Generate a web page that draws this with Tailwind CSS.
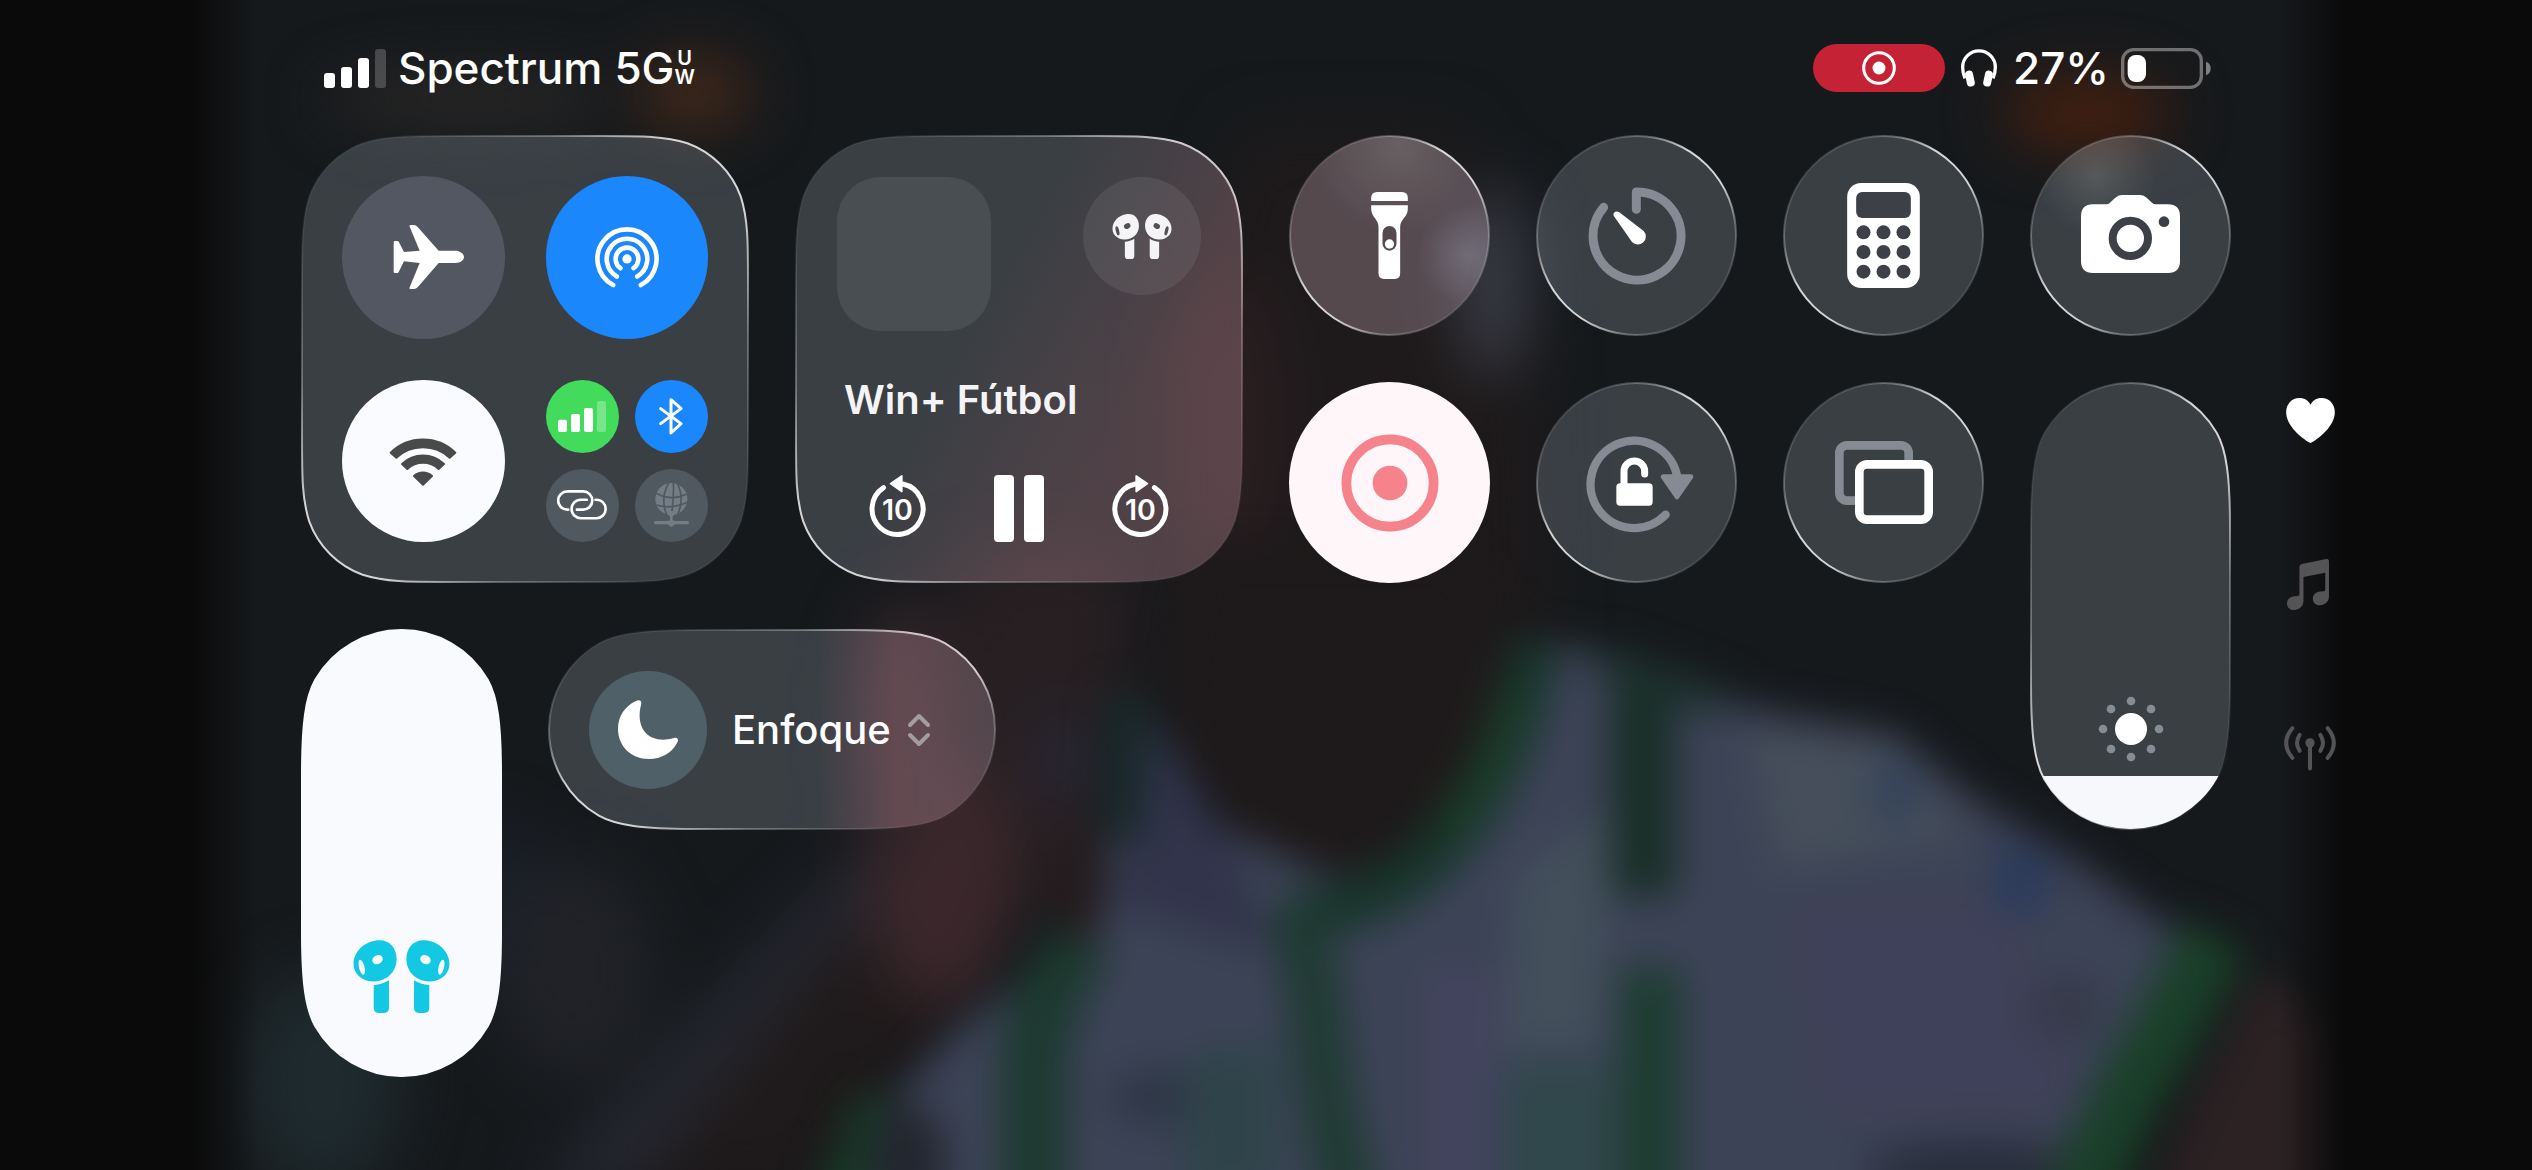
<!DOCTYPE html>
<html lang="es">
<head>
  <meta charset="UTF-8">
  <title>Centro de control</title>
  <meta name="viewport" content="width=device-width, initial-scale=1.0">
  <script src="https://cdn.jsdelivr.net/npm/@tailwindcss/browser@4"></script>
</head>
<body class="relative min-h-screen overflow-x-hidden bg-[#0a0a0a] font-['Inter','Noto_Sans',sans-serif] text-white">

  <!-- shared shapes -->
  <svg class="absolute w-0 h-0" aria-hidden="true">
    <defs>
      <linearGradient id="rim" x1="0" y1="0" x2="1" y2="1">
        <stop offset="0.1" stop-color="#fff" stop-opacity="0.05"/>
        <stop offset="0.28" stop-color="#fff" stop-opacity="0.3"/>
        <stop offset="0.42" stop-color="#fff" stop-opacity="0.8"/>
        <stop offset="0.58" stop-color="#fff" stop-opacity="0.8"/>
        <stop offset="0.72" stop-color="#fff" stop-opacity="0.3"/>
        <stop offset="0.9" stop-color="#fff" stop-opacity="0.05"/>
      </linearGradient>
      <radialGradient id="lensBlue">
        <stop offset="0" stop-color="#9aa4c0" stop-opacity="0.24"/>
        <stop offset="1" stop-color="#9aa4c0" stop-opacity="0"/>
      </radialGradient>
      <radialGradient id="lensWarm">
        <stop offset="0" stop-color="#b0b0a4" stop-opacity="0.2"/>
        <stop offset="1" stop-color="#b0b0a4" stop-opacity="0"/>
      </radialGradient>
      <linearGradient id="mediaTint" x1="0.45" y1="0.3" x2="0.9" y2="0.55">
        <stop offset="0" stop-color="#8c4a50" stop-opacity="0"/>
        <stop offset="0.8" stop-color="#8c4a50" stop-opacity="0.26"/>
      </linearGradient>
      <linearGradient id="focusTint" x1="0" y1="0" x2="1" y2="0">
        <stop offset="0.6" stop-color="#a8505a" stop-opacity="0"/>
        <stop offset="0.78" stop-color="#a8505a" stop-opacity="0.22"/>
        <stop offset="1" stop-color="#a8505a" stop-opacity="0.1"/>
      </linearGradient>
      <path id="tall" d="M100.5 1 A99.5 99.5 0 0 1 186.7 50.8 C196.5 68 200 95 200 145 V303 C200 353 196.5 380 186.7 397.2 A99.5 99.5 0 0 1 14.3 397.2 C4.500 380 1 353 1 303 V145 C1 95 4.500 68 14.3 50.800 A99.5 99.5 0 0 1 100.500 1Z"/>
      <path id="square" d="M147.800 1 H300.200 C342.500 1 363.600 1 386.400 8.200 C411.200 17.200 430.800 36.800 439.800 61.600 C447 84.400 447 105.500 447 147.800 V300.200 C447 342.500 447 363.600 439.800 386.400 C430.800 411.200 411.200 430.800 386.400 439.800 C363.600 447 342.500 447 300.200 447 H147.800 C105.500 447 84.400 447 61.600 439.800 C36.800 430.800 17.200 411.200 8.200 386.400 C1 363.600 1 342.500 1 300.200 V147.800 C1 105.500 1 84.400 8.200 61.600 C17.200 36.800 36.800 17.200 61.600 8.200 C84.400 1 105.500 1 147.800 1Z"/>
      <path id="wide" d="M1 100.500 A99.5 99.5 0 0 1 50.800 14.300 C68 4.500 95 1 145 1 H303 C353 1 380 4.500 397.200 14.300 A99.5 99.5 0 0 1 397.200 186.700 C380 196.500 353 200 303 200 H145 C95 200 68 196.500 50.800 186.700 A99.5 99.5 0 0 1 1 100.500Z"/>
      <clipPath id="tallClip"><use href="#tall"/></clipPath>
      <clipPath id="circleClip"><circle cx="100.500" cy="100.500" r="99.500"/></clipPath>
      <mask id="podMask">
        <rect width="89" height="134" fill="#fff"/>
        <ellipse cx="45" cy="36" rx="10" ry="8" transform="rotate(-28 45 36)" fill="#000"/>
        <ellipse cx="16" cy="50" rx="5" ry="14" transform="rotate(-14 16 50)" fill="#000"/>
      </mask>
      <g id="pod">
        <path mask="url(#podMask)" d="M42 1 C64 -3 80 12 80 35 C80 60 60 77 36 76 C14 75 1 60 1 44 C1 22 20 4 42 1Z"/>
        <path d="M38 83 C49 82 58 79 66 74 V124 Q66 134 57 134 H47 Q38 134 38 124Z"/>
      </g>
      <symbol id="airpods" viewBox="0 0 178 134">
        <use href="#pod"/>
        <use href="#pod" transform="translate(178 0) scale(-1 1)"/>
      </symbol>
      <symbol id="record" viewBox="-147 -147 294 294">
        <circle r="131" fill="none" stroke="currentColor" stroke-width="29"/>
        <circle r="52" fill="currentColor"/>
      </symbol>
      <symbol id="glassCircle" viewBox="0 0 201 201">
        <circle cx="100.500" cy="100.500" r="99.500" fill="#e0f0ff" fill-opacity="0.18" stroke="url(#rim)" stroke-width="2"/>
      </symbol>
    </defs>
  </svg>

  <!-- blurred video behind the panel -->
  <svg class="absolute inset-0 w-full h-full" viewBox="0 0 1568 725" preserveAspectRatio="xMidYMid slice" aria-hidden="true">
    <defs>
      <filter id="soft" x="-20%" y="-20%" width="140%" height="140%" color-interpolation-filters="sRGB"><feGaussianBlur stdDeviation="12"/></filter>
      <filter id="softer" x="-20%" y="-20%" width="140%" height="140%" color-interpolation-filters="sRGB"><feGaussianBlur stdDeviation="18"/></filter>
      <linearGradient id="fade" x1="0" y1="0" x2="1" y2="0">
        <stop offset="0" stop-color="#0a0a0a"/>
        <stop offset="0.075" stop-color="#0a0a0a"/>
        <stop offset="0.102" stop-color="#0a0a0a" stop-opacity="0"/>
        <stop offset="0.9" stop-color="#0a0a0a" stop-opacity="0"/>
        <stop offset="0.927" stop-color="#0a0a0a"/>
        <stop offset="1" stop-color="#0a0a0a"/>
      </linearGradient>
    </defs>
    <rect width="1568" height="725" fill="#16191c"/>
    <g filter="url(#softer)">
      <ellipse cx="430" cy="58" rx="36" ry="22" fill="#43291a"/>
      <ellipse cx="290" cy="62" rx="90" ry="16" fill="#2a2827"/>
      <ellipse cx="1292" cy="70" rx="52" ry="22" fill="#47200f"/>
      <ellipse cx="200" cy="670" rx="50" ry="70" fill="#1e2a2d"/>
      <ellipse cx="300" cy="560" rx="40" ry="50" fill="#1a1f29"/>
      <ellipse cx="355" cy="600" rx="50" ry="70" fill="#202227"/>
      <path d="M330 740 L470 590 L540 520 L560 600 L420 740Z" fill="#262831"/>
      <path d="M390 740 L520 580 L560 560 L620 600 L500 740Z" fill="#1f1a1b"/>
      <path d="M600 340 H700 V560 H540Z" fill="#271f22"/>
      <ellipse cx="660" cy="470" rx="18" ry="30" fill="#282836"/>
      <ellipse cx="584" cy="545" rx="46" ry="80" fill="#3b272b"/>
      <ellipse cx="560" cy="450" rx="30" ry="80" fill="#33252a"/>
      <path d="M720 230 L770 80 H900 L950 200 L960 420 L900 560 L780 560 L725 440Z" fill="#1e1a1b"/>
      <ellipse cx="760" cy="260" rx="30" ry="90" fill="#2b1e21"/>
      <ellipse cx="925" cy="175" rx="22" ry="60" fill="#3a3c46"/>
    </g>
    <g filter="url(#soft)">
      <path d="M715 445 L690 520 L655 590 L590 640 L545 690 L530 760 H1290 L1340 640 L1370 590 L1340 572 L1284 532 L1225 497 L1174 455 L1087 439 L960 396 L900 520 L828 545 L750 510Z" fill="#3c4356"/>
      <path d="M715 445 L690 560 L790 590 L760 520Z" fill="#31344b"/>
      <path d="M880 600 H930 V760 H880Z" fill="#42445e"/>
      <path d="M940 540 L1000 500 L990 650 H930Z" fill="#434f5b"/>
      <path d="M930 660 H1000 V760 H930Z" fill="#30474b"/>
      <path d="M1080 450 L1180 460 L1220 520 L1100 540Z" fill="#454e5a"/>
      <path d="M1110 560 H1240 L1290 690 H1130Z" fill="#3f4059"/>
      <ellipse cx="1225" cy="725" rx="70" ry="18" fill="#282d3b"/>
      <ellipse cx="720" cy="680" rx="34" ry="18" fill="#2e3746"/>
      <path d="M730 740 H790 V650 H740Z" fill="#2f444a"/>
      <path d="M725 430 L740 480 L775 520 L828 540 L895 505 L945 400 L900 340 H740Z" fill="#1e1a1b"/>
      <path d="M951 398 C940 450 925 495 882 535 C860 553 835 565 800 568" stroke="#17352a" stroke-width="30" fill="none"/>
      <path d="M936 430 C930 460 918 490 895 515" stroke="#1b3f29" stroke-width="16" fill="none"/>
      <path d="M800 560 Q814 600 817 641 T840 760" stroke="#1e3a30" stroke-width="32" fill="none"/>
      <path d="M1018 420 L1018 555" stroke="#192e27" stroke-width="40" fill="none"/>
      <path d="M1022 600 V760" stroke="#1c3c2f" stroke-width="36" fill="none"/>
      <path d="M990 408 L1070 436" stroke="#1e322e" stroke-width="18" fill="none"/>
      <path d="M700 430 L694 520" stroke="#19292a" stroke-width="28" fill="none"/>
      <path d="M672 580 Q642 620 640 660 V760" stroke="#1c392f" stroke-width="40" fill="none"/>
      <path d="M545 680 L515 760" stroke="#193a28" stroke-width="30" fill="none"/>
      <ellipse cx="562" cy="720" rx="24" ry="36" fill="#23262f"/>
      <ellipse cx="668" cy="550" rx="18" ry="34" fill="#241c1e"/>
      <path d="M1372 580 L1340 640 L1316 680 L1280 760" stroke="#1a4029" stroke-width="42" fill="none"/>
      <path d="M1400 600 L1450 640 V760 H1325 L1360 680Z" fill="#2c2224"/>
      <ellipse cx="1252" cy="545" rx="18" ry="22" fill="#2a3a5c"/>
      <ellipse cx="1174" cy="491" rx="14" ry="22" fill="#33425a"/>
      <ellipse cx="1280" cy="625" rx="20" ry="18" fill="#353947"/>
    </g>
    <rect width="1568" height="725" fill="url(#fade)"/>
  </svg>

  <div class="relative grid grid-cols-[1fr_minmax(0,1930px)_1fr]">
    <div class="col-start-2">

      <!-- status bar -->
      <header class="flex justify-between items-center h-[48px] mt-[44px] pl-[23px] pr-5 text-[44px] leading-[48px] font-medium">
        <div class="flex items-center">
          <svg class="w-[62px] h-[39px] mr-3" viewBox="0 0 186 117" fill="#fff" role="img" aria-label="Señal">
            <rect x="0" y="72" width="33" height="45" rx="9"/>
            <rect x="51" y="54" width="33" height="63" rx="9"/>
            <rect x="102" y="27" width="33" height="90" rx="9"/>
            <rect x="153" y="0" width="33" height="117" rx="9" fill-opacity="0.2"/>
          </svg>
          <span>Spectrum</span>
          <span class="ml-3">5G</span>
          <span class="flex flex-col items-center text-[20px] leading-[19px] font-semibold"><span>U</span><span>W</span></span>
        </div>
        <div class="flex items-center">
          <button class="flex items-center justify-center w-[132px] h-[48px] rounded-full bg-[#c52236]" aria-label="Grabando pantalla">
            <svg class="w-[34px] h-[34px]" viewBox="-50 -50 100 100"><circle r="45" fill="none" stroke="#fff" stroke-width="9"/><circle r="19" fill="#fff"/></svg>
          </button>
          <svg class="w-[36px] h-[38px] ml-4" viewBox="0 0 109 113" role="img" aria-label="Auriculares">
            <path d="M12 88 Q5 72 5 54 A49 49 0 0 1 104 54 Q104 72 97 88" fill="none" stroke="#fff" stroke-width="10"/>
            <rect x="15" y="64" width="24" height="49" rx="12" transform="rotate(-12 27 88)" fill="#fff"/>
            <rect x="70" y="64" width="24" height="49" rx="12" transform="rotate(12 82 88)" fill="#fff"/>
          </svg>
          <span class="ml-4">27%</span>
          <svg class="w-[90px] h-[41px] ml-3" viewBox="0 0 270 123" role="img" aria-label="Batería">
            <rect x="5" y="5" width="236" height="113" rx="33" fill="none" stroke="#fff" stroke-opacity="0.38" stroke-width="10"/>
            <rect x="20" y="21" width="55" height="81" rx="24" fill="#fff"/>
            <path d="M255 41 Q269 46 269 61 Q269 77 255 82Z" fill="#fff" fill-opacity="0.45"/>
          </svg>
        </div>
      </header>

      <main class="grid grid-cols-8 grid-rows-[repeat(4,201px)] gap-[46px] mt-[43px]">

        <!-- connectivity -->
        <section class="relative col-span-2 row-span-2">
          <svg class="absolute inset-0 w-full h-full" viewBox="0 0 448 448" preserveAspectRatio="none"><use href="#square" fill="#e0f0ff" fill-opacity="0.18" stroke="url(#rim)" stroke-width="2"/></svg>
          <div class="relative grid grid-cols-2 grid-rows-2 gap-[41px] h-full p-[41px]">
            <button class="flex items-center justify-center rounded-full bg-[#535761]" aria-label="Modo avión">
              <svg class="w-[81px] h-[64px]" viewBox="-32 0 243 192" fill="#fff"><path d="M135 77 H185 C200 77 211 87 211 96 C211 105 200 114 185 114 H135 L72 187 Q67 192 61 192 H51 Q46 192 48 187 L78 114 L31 109 L15 141 Q14 144 11 144 H4 Q0 144 0 140 V52 Q0 48 4 48 H10 Q14 48 16 52 L31 81 L78 77 L48 5 Q46 0 51 0 H61 Q67 0 72 6Z"/></svg>
            </button>
            <button class="flex items-center justify-center rounded-full bg-[#1b87fd]" aria-label="AirDrop">
              <svg class="w-[66px] h-[70px]" viewBox="-100 -112 200 212" fill="none" stroke="#fff" stroke-width="14" stroke-linecap="round">
                <path d="M-42 79 A89.500 89.500 0 1 1 42 79"/>
                <path d="M-31 53 A61.400 61.400 0 1 1 31 53"/>
                <path d="M-20 28 A34.400 34.400 0 1 1 20 28"/>
                <circle r="14" fill="#fff" stroke="none"/>
              </svg>
            </button>
            <button class="flex items-center justify-center rounded-full bg-[#f9fbff]" aria-label="Wi-Fi">
              <svg class="w-[68px] h-[50px]" viewBox="-102 -149 204 150" fill="#4a4a4a" stroke="#4a4a4a" stroke-width="6" stroke-linejoin="round">
                <path d="M-97 -99 A139 139 0 0 1 97 -99 L80 -84 A118 118 0 0 0 -80 -84Z"/>
                <path d="M-63 -65 A91 91 0 0 1 63 -65 L47 -50 A69 69 0 0 0 -47 -50Z"/>
                <path d="M-27 -29 A40 40 0 0 1 27 -29 L0 -3Z"/>
              </svg>
            </button>
            <div class="grid grid-cols-2 grid-rows-2 gap-4">
              <button class="flex items-center justify-center rounded-full bg-[#43db5c]" aria-label="Datos móviles">
                <svg class="w-[48px] h-[31px]" viewBox="0 0 144 93" fill="#fff">
                  <rect x="0" y="56" width="27" height="37" rx="6"/>
                  <rect x="39" y="39" width="27" height="54" rx="6"/>
                  <rect x="78" y="21" width="27" height="72" rx="6"/>
                  <rect x="117" y="0" width="27" height="93" rx="6" fill-opacity="0.28"/>
                </svg>
              </button>
              <button class="flex items-center justify-center rounded-full bg-[#1b87fd]" aria-label="Bluetooth">
                <svg class="w-[24px] h-[37px]" viewBox="0 0 72 111" fill="none" stroke="#fff" stroke-width="9" stroke-linejoin="round" stroke-linecap="round"><path d="M5 32 L66 77 L36 105 V5 L66 32 L5 77"/></svg>
              </button>
              <button class="flex items-center justify-center rounded-full bg-[#505860]" aria-label="Compartir Internet">
                <svg class="w-[50px] h-[30px]" viewBox="0 0 151 90" fill="none" stroke="#fff" stroke-width="8" stroke-linecap="round">
                  <path d="M34 59 H31 A27.500 27.500 0 0 1 31 4 H79 A27.500 27.500 0 0 1 79 59 H60"/>
                  <path d="M90 29 H72 A28 28 0 0 0 72 85 H119 A28 28 0 0 0 119 29 H116"/>
                </svg>
              </button>
              <button class="flex items-center justify-center rounded-full bg-[#505860]" aria-label="VPN">
                <svg class="w-[35px] h-[44px]" viewBox="0 0 105 132" fill="#747d85">
                  <circle cx="52" cy="48" r="48"/>
                  <g fill="none" stroke="#505860" stroke-width="5">
                    <path d="M6 30 Q50 56 98 34"/>
                    <path d="M8 66 Q52 80 100 58"/>
                    <path d="M44 0 Q18 44 38 96"/>
                    <path d="M58 0 Q60 50 52 96"/>
                    <path d="M70 2 Q92 44 72 92"/>
                  </g>
                  <path d="M40 92 L52 104 L64 92 V84 H40Z"/>
                  <path d="M48 96 H56 V112 L64 114 H101 Q105 114 105 119 Q105 124 101 124 H64 L52 132 L40 124 H4 Q0 124 0 119 Q0 114 4 114 H40 L48 112Z"/>
                </svg>
              </button>
            </div>
          </div>
        </section>

        <!-- now playing -->
        <section class="relative col-span-2 row-span-2">
          <svg class="absolute inset-0 w-full h-full" viewBox="0 0 448 448" preserveAspectRatio="none">
            <use href="#square" fill="#e0f0ff" fill-opacity="0.18" stroke="url(#rim)" stroke-width="2"/>
            <use href="#square" fill="url(#mediaTint)"/>
          </svg>
          <div class="relative flex flex-col h-full px-[42px] pt-[42px]">
            <div class="flex justify-between items-start">
              <div class="w-[154px] h-[154px] rounded-[44px] bg-white/8"></div>
              <button class="flex items-center justify-center w-[118px] h-[118px] rounded-full bg-white/8 text-[#f4f4f6]" aria-label="Salida de audio">
                <svg class="w-[60px] h-[45px]" fill="currentColor"><use href="#airpods"/></svg>
              </button>
            </div>
            <h2 class="mt-[45px] pl-[7px] text-[40px] leading-[48px] font-semibold text-[#f4f4f6]">Win+ Fútbol</h2>
            <div class="grid grid-cols-3 mt-[51px] justify-items-center">
              <button aria-label="Retroceder 10 segundos">
                <svg class="w-[57px] h-[67px]" viewBox="0 0 170 202">
                  <path d="M101 27 A77 77 0 1 1 43 38" fill="none" stroke="#fff" stroke-width="15" stroke-linecap="round"/>
                  <path d="M64 26 L98 3 V50Z" fill="#fff" stroke="#fff" stroke-width="5" stroke-linejoin="round"/>
                  <text x="85" y="135" text-anchor="middle" font-size="86" font-weight="600" fill="#fff">10</text>
                </svg>
              </button>
              <button class="flex gap-[10px]" aria-label="Pausa">
                <span class="w-[20px] h-[67px] rounded-[4px] bg-white"></span>
                <span class="w-[20px] h-[67px] rounded-[4px] bg-white"></span>
              </button>
              <button aria-label="Avanzar 10 segundos">
                <svg class="w-[57px] h-[67px]" viewBox="0 0 170 202">
                  <path d="M69 27 A77 77 0 1 0 127 38" fill="none" stroke="#fff" stroke-width="15" stroke-linecap="round"/>
                  <path d="M106 26 L72 3 V50Z" fill="#fff" stroke="#fff" stroke-width="5" stroke-linejoin="round"/>
                  <text x="85" y="135" text-anchor="middle" font-size="86" font-weight="600" fill="#fff">10</text>
                </svg>
              </button>
            </div>
          </div>
        </section>

        <button class="relative flex items-center justify-center" aria-label="Linterna">
          <svg class="absolute inset-0 w-full h-full" viewBox="0 0 201 201">
            <circle cx="100.500" cy="100.500" r="99.500" fill="#8c4a54" fill-opacity="0.24"/>
            <g clip-path="url(#circleClip)">
              <circle cx="110" cy="10" r="90" fill="url(#lensWarm)"/>
              <circle cx="178" cy="120" r="50" fill="url(#lensBlue)"/>
            </g>
            <use href="#glassCircle"/>
          </svg>
          <svg class="relative w-[37px] h-[87px]" viewBox="0 0 110 261" fill="#fff">
            <path d="M0 27 V18 Q0 0 18 0 H92 Q110 0 110 18 V27Z"/>
            <path fill-rule="evenodd" d="M0 40 H110 V50 C110 76 87 80 87 105 V244 Q87 261 70 261 H39 Q22 261 22 244 V105 C22 80 0 76 0 50Z M55 102 A21 21 0 0 0 34 123 V155 A21 21 0 0 0 76 155 V123 A21 21 0 0 0 55 102Z"/>
            <circle cx="55" cy="156" r="14"/>
          </svg>
        </button>

        <button class="relative flex items-center justify-center" aria-label="Temporizador">
          <svg class="absolute inset-0 w-full h-full"><use href="#glassCircle"/></svg>
          <svg class="relative w-[98px] h-[98px]" viewBox="-147 -147 294 294">
            <path d="M-2 -80 V-132 A132 132 0 1 1 -100 -86" fill="none" stroke="#868a92" stroke-width="27" stroke-linecap="round" stroke-linejoin="round"/>
            <path d="M-53 -71 L20 -15 A24 24 0 1 1 -15 18 L-69 -59 C-75 -70 -63 -78 -53 -71Z" fill="#fff"/>
          </svg>
        </button>

        <button class="relative flex items-center justify-center" aria-label="Calculadora">
          <svg class="absolute inset-0 w-full h-full"><use href="#glassCircle"/></svg>
          <svg class="relative w-[73px] h-[105px]" viewBox="0 0 218 315" fill="#3d4047">
            <rect width="218" height="315" rx="42" fill="#fff"/>
            <rect x="27" y="27" width="164" height="78" rx="18"/>
            <circle cx="49" cy="148" r="21"/><circle cx="109" cy="148" r="21"/><circle cx="169" cy="148" r="21"/>
            <circle cx="49" cy="207" r="21"/><circle cx="109" cy="207" r="21"/><circle cx="169" cy="207" r="21"/>
            <circle cx="49" cy="266" r="21"/><circle cx="109" cy="266" r="21"/><circle cx="169" cy="266" r="21"/>
          </svg>
        </button>

        <button class="relative flex items-center justify-center pb-1" aria-label="Cámara">
          <svg class="absolute inset-0 w-full h-full" viewBox="0 0 201 201">
            <circle cx="66" cy="40" r="60" fill="url(#lensWarm)" clip-path="url(#circleClip)"/>
            <use href="#glassCircle"/>
          </svg>
          <svg class="relative w-[99px] h-[78px]" viewBox="0 0 297 234">
            <path fill="#fff" d="M0 64 Q0 28 36 28 H76 Q82 28 87 23 L103 8 Q111 0 122 0 H178 Q189 0 197 8 L213 23 Q218 28 224 28 H261 Q297 28 297 64 V198 Q297 234 261 234 H36 Q0 234 0 198Z"/>
            <circle cx="148" cy="130" r="53" fill="none" stroke="#3d4047" stroke-width="24"/>
            <circle cx="249" cy="80" r="16" fill="#3d4047"/>
          </svg>
        </button>

        <button class="flex items-center justify-center rounded-full bg-[#fef6f9] text-[#f6828c]" aria-label="Grabación de pantalla">
          <svg class="w-[98px] h-[98px]"><use href="#record"/></svg>
        </button>

        <button class="relative flex items-center justify-center" aria-label="Bloqueo de rotación">
          <svg class="absolute inset-0 w-full h-full"><use href="#glassCircle"/></svg>
          <svg class="relative w-[114px] h-[100px]" viewBox="-171 -150 342 300">
            <path d="M120 -22 A131 131 0 1 0 86 95" fill="none" stroke="#868a92" stroke-width="25" stroke-linecap="round"/>
            <path d="M78 -19 H162 L120 42Z" fill="#868a92" stroke="#868a92" stroke-width="14" stroke-linejoin="round"/>
            <rect x="-62" y="1" width="109" height="67" rx="11" fill="#fff"/>
            <path d="M-39 8 V-35 A31 31 0 0 1 23 -35 V-27" fill="none" stroke="#fff" stroke-width="21" stroke-linecap="round"/>
          </svg>
        </button>

        <button class="relative flex items-center justify-center" aria-label="Duplicar pantalla">
          <svg class="absolute inset-0 w-full h-full"><use href="#glassCircle"/></svg>
          <svg class="relative w-[98px] h-[83px]" viewBox="0 0 294 249" fill="none" stroke-width="26">
            <path d="M60 179 H36 A23 23 0 0 1 13 156 V36 A23 23 0 0 1 36 13 H198 A23 23 0 0 1 221 36 V58" stroke="#868a92"/>
            <rect x="73" y="70" width="208" height="166" rx="23" stroke="#fff"/>
          </svg>
        </button>

        <!-- brightness -->
        <label class="relative row-span-2 flex flex-col items-center justify-end pb-[68px]">
          <svg class="absolute inset-0 w-full h-full" viewBox="0 0 201 448" preserveAspectRatio="none">
            <use href="#tall" fill="#e0f0ff" fill-opacity="0.18" stroke="url(#rim)" stroke-width="2"/>
            <rect y="394" width="201" height="54" fill="#f6f8fc" clip-path="url(#tallClip)"/>
          </svg>
          <svg class="relative w-[66px] h-[66px]" viewBox="-99 -99 198 198" fill="#868c93">
            <circle r="48" fill="#fff"/>
            <circle cy="-84" r="13"/><circle cx="60" cy="-60" r="13"/><circle cx="84" r="13"/><circle cx="60" cy="60" r="13"/>
            <circle cy="84" r="13"/><circle cx="-60" cy="60" r="13"/><circle cx="-84" r="13"/><circle cx="-60" cy="-60" r="13"/>
          </svg>
          <input type="range" min="0" max="100" value="12" aria-label="Brillo" class="absolute inset-0 w-full h-full opacity-0 [writing-mode:vertical-lr] [direction:rtl]">
        </label>

        <!-- volume -->
        <label class="relative row-span-2 flex flex-col items-center justify-end pb-[64px] text-[#12c8e2]">
          <svg class="absolute inset-0 w-full h-full" viewBox="0 0 201 448" preserveAspectRatio="none"><use href="#tall" fill="#f8fafe" stroke="#f8fafe" stroke-width="2"/></svg>
          <svg class="relative w-[97px] h-[73px]" fill="currentColor"><use href="#airpods"/></svg>
          <input type="range" min="0" max="100" value="100" aria-label="Volumen" class="absolute inset-0 w-full h-full opacity-0 [writing-mode:vertical-lr] [direction:rtl]">
        </label>

        <!-- focus -->
        <button class="relative col-span-2 flex items-center pl-[41px]">
          <svg class="absolute inset-0 w-full h-full" viewBox="0 0 448 201" preserveAspectRatio="none" aria-hidden="true">
            <use href="#wide" fill="#e0f0ff" fill-opacity="0.18" stroke="url(#rim)" stroke-width="2"/>
            <use href="#wide" fill="url(#focusTint)"/>
          </svg>
          <span class="relative flex items-center justify-center w-[118px] h-[118px] rounded-full bg-[#506068]">
            <svg class="w-[60px] h-[60px]" viewBox="0 0 60 60" fill="#fff"><path d="M18 1 C22 -1 24 1 23 5 C17 29 31 45 56 38 C60 37 61 40 59 43 C54 53 43 59 31 59 C13 59 0 46 0 29 C0 16 7 6 18 1Z"/></svg>
          </span>
          <span class="relative ml-[25px] text-[40px] leading-[48px] font-medium">Enfoque</span>
          <svg class="relative w-[24px] h-[34px] ml-4" viewBox="0 0 24 34" fill="none" stroke="#a39da1" stroke-width="4" stroke-linecap="round" stroke-linejoin="round"><path d="M3 12 L12 3 L21 12"/><path d="M3 22 L12 31 L21 22"/></svg>
        </button>
      </main>
    </div>

    <!-- pages -->
    <nav class="flex flex-col gap-[112px] pt-[394px] pl-[53px]" aria-label="Páginas">
      <a href="#favoritos" class="flex items-center justify-center w-[52px] h-[52px]" aria-label="Favoritos">
        <svg class="w-[49px] h-[45px]" viewBox="0 0 146 135" fill="#fff"><path d="M73 135 C68 135 0 92 0 43 C0 18 17 0 40 0 C55 0 67 8 73 20 C79 8 91 0 106 0 C129 0 146 18 146 43 C146 92 78 135 73 135Z"/></svg>
      </a>
      <a href="#musica" class="flex items-center justify-center w-[52px] h-[52px]" aria-label="Música">
        <svg class="w-[46px] h-[51px]" viewBox="0 0 137 152" fill="#545456"><path d="M37 24 Q37 17 44 15 L117 0 Q125 -1 125 7 V112 C125 127 113 138 98 138 C86 138 77 130 77 119 C77 106 86 98 99 97 L110 96 Q114 95 114 91 V41 L49 54 V124 C49 141 37 152 21 152 C9 152 0 144 0 133 C0 121 9 112 22 111 L33 110 Q37 109 37 105Z"/></svg>
      </a>
      <a href="#conectividad" class="flex items-center justify-center w-[52px] h-[52px]" aria-label="Conectividad">
        <svg class="w-[52px] h-[45px]" viewBox="0 0 156 134" fill="none" stroke="#545456" stroke-width="12" stroke-linecap="round">
          <circle cx="78" cy="50" r="14" fill="#545456" stroke="none"/>
          <path d="M78 50 V127"/>
          <path d="M47 26 Q31 50 47 74"/><path d="M109 26 Q125 50 109 74"/>
          <path d="M25 6 Q-12 50 25 95"/><path d="M131 6 Q168 50 131 95"/>
        </svg>
      </a>
    </nav>
  </div>

</body>
</html>
